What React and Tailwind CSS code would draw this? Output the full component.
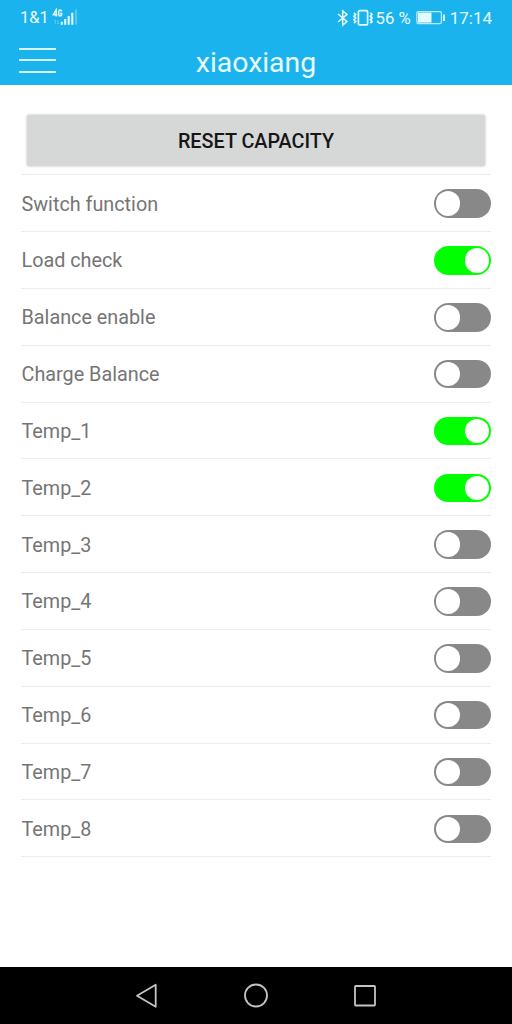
const settings = [
  ["Switch function", false],
  ["Load check", true],
  ["Balance enable", false],
  ["Charge Balance", false],
  ["Temp_1", true],
  ["Temp_2", true],
  ["Temp_3", false],
  ["Temp_4", false],
  ["Temp_5", false],
  ["Temp_6", false],
  ["Temp_7", false],
  ["Temp_8", false],
];

function SignalIcon() {
  return (
    <svg className="ml-[3.5px] h-[20px] w-[26px]" viewBox="0 0 26 20" fill="none" stroke="#e3fbff">
      <path d="M4.2 8.6V1.8L1.3 6.7h4M9.6 3.6C9.5 2.4 9 1.9 8.2 1.9 7.2 1.9 6.8 2.5 6.8 3.5v3c0 1 .4 1.6 1.4 1.6s1.4-.5 1.4-1.5V5.5H8.2" strokeWidth="1.5" />
      <path d="M3.3 12v4M2 13.3 3.3 12M5.8 12v4M5.8 16 7 14.8" strokeWidth="0.7" opacity="0.45" />
      <path d="M9.8 13.8v3M13.2 11v5.8M16.7 8v8.8M20.3 4.8v12" strokeWidth="2.1" />
      <path d="M24 1.6v15.2" strokeWidth="1.8" opacity="0.35" />
    </svg>
  );
}

function BluetoothIcon() {
  return (
    <svg className="h-[18px] w-[12px]" viewBox="0 0 12 18" fill="none" stroke="#e3fbff" strokeWidth="1.5">
      <path d="M1 5l9 7.6-4.3 3.6V1.8L10 5.4l-9 7.6" />
    </svg>
  );
}

function VibrateIcon() {
  return (
    <svg className="ml-[4px] h-[18px] w-[20px]" viewBox="0 0 20 18" fill="none" stroke="#e3fbff">
      <rect x="5.4" y="1.7" width="9.2" height="14.2" rx="1.2" strokeWidth="1.7" />
      <path d="M1 3.8 2.6 5.5 1 7.2 2.6 9 1 10.8 2.6 12.5 1 14.2M17.4 3.8 19 5.5 17.4 7.2 19 9l-1.6 1.8 1.6 1.7-1.6 1.7" strokeWidth="1.8" />
    </svg>
  );
}

function BatteryIcon() {
  return (
    <svg className="ml-[5px] h-[14px] w-[30px]" viewBox="0 0 30 14" fill="none">
      <rect x="0.9" y="0.5" width="24.5" height="12.2" rx="1.5" stroke="#b5ecfb" strokeWidth="1.3" />
      <path d="M2 1.6h13.5v10H2z" fill="#e3fbff" />
      <path d="M28 3.6v6.5" stroke="#e3fbff" strokeWidth="1.9" />
    </svg>
  );
}

function Toggle({ on, label }) {
  return (
    <button
      role="switch"
      aria-checked={on}
      aria-label={label}
      className={`flex h-[28.5px] w-[57.5px] items-center rounded-full px-[2px] ${on ? "justify-end bg-[#00ff00]" : "justify-start bg-[#888888]"}`}
    >
      <span className="size-[24.5px] rounded-full bg-white" />
    </button>
  );
}

export default function App() {
  return (
    <div className="flex h-[1024px] w-[512px] flex-col bg-white font-['Roboto',sans-serif]">
      <header className="h-[85.3px] shrink-0 bg-[#1ab3ed] text-[#e9fcff]">
        <div className="flex h-[35px] items-center justify-between pl-[20px] pr-[20px]">
          <div className="flex items-center pt-px">
            <span className="w-[28px] pt-px text-[16.4px]">1&amp;1</span>
            <SignalIcon />
          </div>
          <div className="flex items-center pt-px">
            <BluetoothIcon />
            <VibrateIcon />
            <span className="ml-[3px] pt-px text-[16.7px]">56 %</span>
            <BatteryIcon />
            <span className="ml-[4px] pt-px text-[17px]">17:14</span>
          </div>
        </div>
        <div className="grid h-[50px] grid-cols-[37px_1fr_37px] items-start px-[19px]">
          <button aria-label="Menu" className="mt-[12.5px] flex h-[25.5px] flex-col justify-between">
            <span className="h-[2px] w-[37px] bg-[#d5f5fd]" />
            <span className="h-[2px] w-[37px] bg-[#d5f5fd]" />
            <span className="h-[2px] w-[37px] bg-[#d5f5fd]" />
          </button>
          <h1 className="pt-[3px] text-center text-[28.4px] leading-[50px]">xiaoxiang</h1>
        </div>
      </header>
      <main className="flex-1 px-[21px] pt-[30px]">
        <button className="mx-[6px] block h-[51px] w-[458px] rounded-[2px] bg-[#d6d8d7] pt-[3px] text-[19.8px] font-medium text-[#161616] shadow-[0_0_3px_rgba(0,0,0,0.26)]">
          RESET CAPACITY
        </button>
        <ul className="mt-[8px] border-t border-[#ececec]">
          {settings.map(([label, on]) => (
            <li key={label} className="flex h-[56.84px] items-center justify-between border-b border-[#ececec] pl-[0.5px] pt-px text-[19.8px] text-[#757575]">
              <span className="pt-[1.6px]">{label}</span>
              <Toggle on={on} label={label} />
            </li>
          ))}
        </ul>
      </main>
      <nav className="flex h-[57px] shrink-0 items-center justify-between bg-black pl-[135px] pr-[135px]">
        <svg className="h-[26px] w-[24px]" viewBox="0 0 24 26" fill="none" stroke="#c4c4c4" strokeWidth="1.8" strokeLinejoin="round">
          <path d="M20.7 1.8v22L2 12.8z" />
        </svg>
        <svg className="size-[26px]" viewBox="0 0 26 26" fill="none" stroke="#c4c4c4" strokeWidth="1.8">
          <circle cx="13" cy="12.5" r="11" />
        </svg>
        <svg className="size-[24px]" viewBox="0 0 24 24" fill="none" stroke="#c4c4c4" strokeWidth="1.8">
          <rect x="2" y="2" width="20" height="19.5" rx="0.7" />
        </svg>
      </nav>
    </div>
  );
}
